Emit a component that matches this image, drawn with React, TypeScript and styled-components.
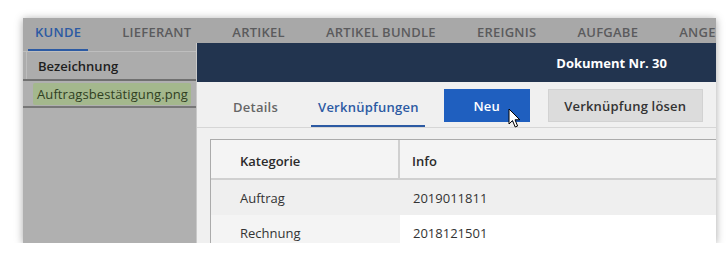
import React from 'react';
import styled, { createGlobalStyle } from 'styled-components';

const GlobalStyle = createGlobalStyle`
  body {
    margin: 0;
    background: #ffffff;
    font-family: 'Open Sans', 'Noto Sans', sans-serif;
  }
`;

const Page = styled.div`
  padding: 18px 0 0 23px;
`;

const Window = styled.div`
  position: relative;
  width: 693px;
  height: 225px;
  overflow: hidden;
  background: #b0b0b0;
  box-shadow: 0 1px 8px rgba(0, 0, 0, 0.35);
`;

const TabBar = styled.div`
  display: flex;
  gap: 27px;
  height: 33px;
  padding-left: 5px;
  background: #a8a8a8;
  border-bottom: 1px solid #bebebe;
  white-space: nowrap;
`;

const TopTab = styled.div<{ $active?: boolean }>`
  box-sizing: border-box;
  height: 33px;
  padding: 5px 7px 0;
  font-size: 13px;
  line-height: 18px;
  font-weight: 600;
  letter-spacing: 0.25px;
  color: ${(p) => (p.$active ? '#2c5aa3' : '#5b5b5d')};
  border-bottom: 2px solid ${(p) => (p.$active ? '#2c5aa3' : 'transparent')};
`;

const LeftList = styled.div`
  width: 173px;
`;

const ListHeader = styled.div`
  display: flex;
  height: 27px;
  border-bottom: 2px solid #707070;
  background: #acacac;
`;

const RowMarker = styled.div`
  width: 3px;
  border-right: 1px solid #bdbdbd;
`;

const HeaderLabel = styled.div`
  display: flex;
  align-items: center;
  padding-left: 11px;
  font-size: 13px;
  font-weight: 600;
  color: #1e1e1e;
`;

const ListRow = styled.div`
  display: flex;
  align-items: center;
  height: 25px;
  padding-left: 10px;
  border-bottom: 2px solid #777777;
`;

const Highlight = styled.span`
  padding: 2px 3px 2px 4px;
  font-size: 13px;
  letter-spacing: 0.1px;
  color: #30401f;
  background: #a4b88d;
  border-radius: 2px;
`;

const Drawer = styled.div`
  position: absolute;
  top: 25px;
  left: 174px;
  right: 0;
  bottom: 0;
  display: flex;
  flex-direction: column;
  background: #f0f0f0;
  box-shadow: -1px 0 0 #c9c9c9;
`;

const DrawerHeader = styled.div`
  display: flex;
  flex-shrink: 0;
  align-items: center;
  justify-content: flex-end;
  height: 39px;
  padding-right: 49px;
  background: #22344f;
  color: #ffffff;
  font-size: 13px;
  font-weight: 700;
`;

const ToolRow = styled.div`
  display: flex;
  flex-shrink: 0;
  height: 45px;
  padding-left: 29px;
  border-bottom: 1px solid #d6d6d6;
`;

const SubTab = styled.div<{ $active?: boolean }>`
  display: flex;
  align-items: center;
  box-sizing: border-box;
  height: 45px;
  padding: 7px 6px 0 7px;
  margin-right: ${(p) => (p.$active ? '19px' : '27px')};
  font-size: 13px;
  font-weight: 600;
  letter-spacing: 0.25px;
  color: ${(p) => (p.$active ? '#2c5aa3' : '#666666')};
  border-bottom: 2px solid ${(p) => (p.$active ? '#2c5aa3' : 'transparent')};
`;

const Button = styled.button<{ $primary?: boolean; $width: number }>`
  position: relative;
  box-sizing: border-box;
  flex-shrink: 0;
  width: ${(p) => p.$width}px;
  height: 33px;
  margin: 7px 18px 0 0;
  padding: 0;
  font-family: inherit;
  font-size: 13px;
  font-weight: 600;
  letter-spacing: 0.2px;
  color: ${(p) => (p.$primary ? '#ffffff' : '#333333')};
  background: ${(p) => (p.$primary ? '#1f5fbf' : '#dcdcdc')};
  border: 1px solid ${(p) => (p.$primary ? '#1f5fbf' : '#d2d2d2')};
  border-radius: 0;
`;

const Cursor = styled.svg`
  position: absolute;
  left: 63px;
  top: 18px;
`;

const TableArea = styled.div`
  flex-shrink: 0;
  padding: 11px 0 0 13px;
`;

const Table = styled.div`
  display: grid;
  grid-template-columns: 189px 1fr;
  border-top: 1px solid #ababab;
  border-left: 1px solid #ababab;
`;

const HeadCell = styled.div<{ $pad: number; $divider?: boolean }>`
  display: flex;
  align-items: center;
  height: 35px;
  padding: 3px 0 0 ${(p) => p.$pad}px;
  background: #f4f4f4;
  border-bottom: 2px solid #d0d0d0;
  border-right: ${(p) => (p.$divider ? '2px solid #d0d0d0' : 'none')};
  font-size: 13px;
  font-weight: 600;
  color: #2b2b2b;
`;

const Cell = styled.div<{ $pad: number; $bg: string }>`
  display: flex;
  align-items: center;
  height: 34px;
  padding: 1px 0 0 ${(p) => p.$pad}px;
  background: ${(p) => p.$bg};
  font-size: 13px;
  color: #333333;
`;

const tabs = ['Kunde', 'Lieferant', 'Artikel', 'Artikel Bundle', 'Ereignis', 'Aufgabe', 'Angebot'];

const rows = [
  { kategorie: 'Auftrag', info: '2019011811', bg: ['#efefef', '#efefef'] },
  { kategorie: 'Rechnung', info: '2018121501', bg: ['#f4f4f4', '#ffffff'] },
];

export default function App(): JSX.Element {
  return (
    <Page>
      <GlobalStyle />
      <Window>
        <TabBar>
          {tabs.map((t, i) => (
            <TopTab key={t} $active={i === 0}>
              {t.toUpperCase()}
            </TopTab>
          ))}
        </TabBar>
        <LeftList>
          <ListHeader>
            <RowMarker />
            <HeaderLabel>Bezeichnung</HeaderLabel>
          </ListHeader>
          <ListRow>
            <Highlight>Auftragsbestätigung.png</Highlight>
          </ListRow>
        </LeftList>
        <Drawer>
          <DrawerHeader>Dokument Nr. 30</DrawerHeader>
          <ToolRow>
            <SubTab>Details</SubTab>
            <SubTab $active>Verknüpfungen</SubTab>
            <Button $primary $width={86}>
              Neu
              <Cursor width="14" height="21" viewBox="0 0 14 21">
                <path
                  d="M1 1 L1 16 L4.5 12.6 L7.2 19 L9.6 18 L7 11.8 L11.8 11.8 Z"
                  fill="#ffffff"
                  stroke="#000000"
                  strokeWidth="1"
                  strokeLinejoin="round"
                />
              </Cursor>
            </Button>
            <Button $width={155}>Verknüpfung lösen</Button>
          </ToolRow>
          <TableArea>
            <Table>
              <HeadCell $pad={29} $divider>Kategorie</HeadCell>
              <HeadCell $pad={12}>Info</HeadCell>
              {rows.map((r) => (
                <React.Fragment key={r.kategorie}>
                  <Cell $pad={29} $bg={r.bg[0]}>{r.kategorie}</Cell>
                  <Cell $pad={13} $bg={r.bg[1]}>{r.info}</Cell>
                </React.Fragment>
              ))}
            </Table>
          </TableArea>
        </Drawer>
      </Window>
    </Page>
  );
}
